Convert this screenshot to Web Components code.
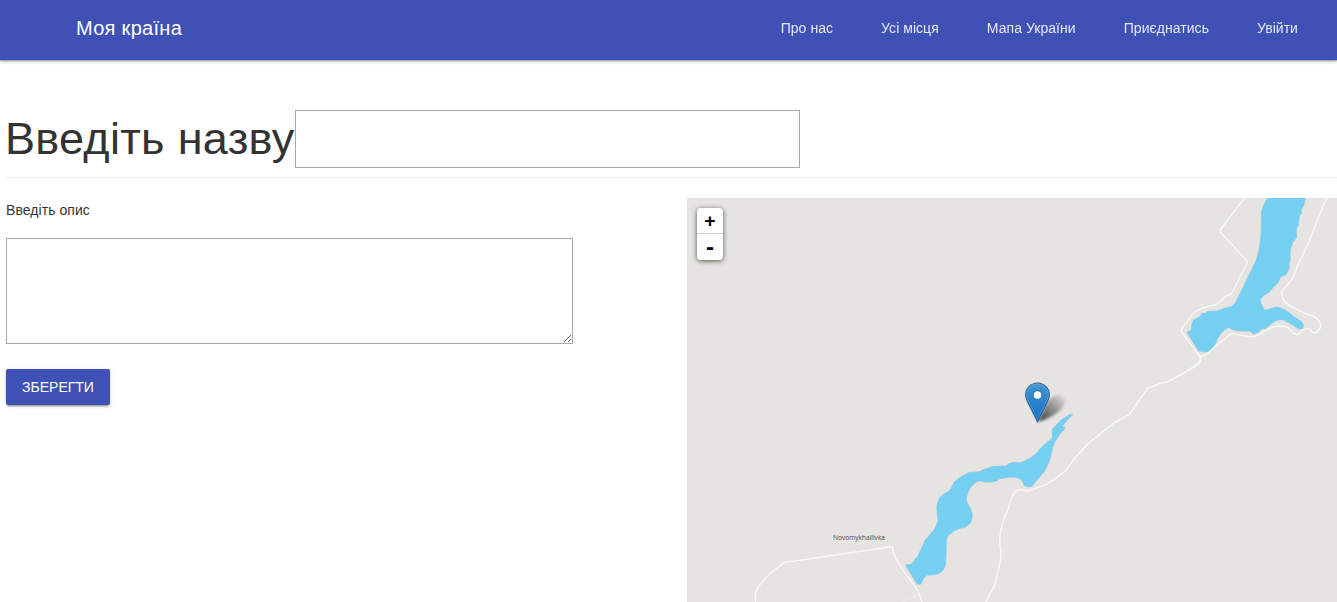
<!DOCTYPE html>
<html lang="uk">
<head>
<meta charset="utf-8">
<title>Моя країна</title>
<style>
  html, body { margin: 0; height: 100%; background: #fff; }
  body { font-family: "Liberation Sans", Arial, sans-serif; font-size: 14px; color: #333; overflow: hidden; }
</style>
</head>
<body>
<country-app></country-app>

<template id="t-app">
  <style>
    :host { display: flex; flex-direction: column; height: 100vh; overflow: hidden; }
    main { flex: 1; min-height: 0; display: flex; flex-direction: column; padding: 50px 0 0 6px; }
    .columns { flex: 1; min-height: 0; display: grid; grid-template-columns: 681px 1fr; padding-top: 20px; }
  </style>
  <site-header heading="Моя країна">
    <nav-link>Про нас</nav-link>
    <nav-link>Усі місця</nav-link>
    <nav-link>Мапа України</nav-link>
    <nav-link>Приєднатись</nav-link>
    <nav-link>Увійти</nav-link>
  </site-header>
  <main>
    <title-field>Введіть назву</title-field>
    <div class="columns">
      <place-form></place-form>
      <place-map></place-map>
    </div>
  </main>
</template>

<template id="t-header">
  <style>
    :host { display: flex; align-items: center; flex: none; height: 60px; box-sizing: border-box; padding: 0 15px 4px 76px;
      background: #3f51b5; color: #fff; position: relative;
      box-shadow: 0 2px 2px 0 rgba(0,0,0,.14), 0 1px 1px 0 rgba(0,0,0,.2), 0 1px 5px 0 rgba(0,0,0,.12); }
    .title { font-size: 20px; letter-spacing: .3px; line-height: 24px; flex: 1; }
    nav { display: flex; }
  </style>
  <span class="title"></span>
  <nav><slot></slot></nav>
</template>

<template id="t-link">
  <style>
    :host { display: block; padding: 0 24px; line-height: 24px; font-size: 14px; letter-spacing: .05px; opacity: .87; white-space: nowrap; }
  </style>
  <slot></slot>
</template>

<template id="t-title">
  <style>
    :host { display: flex; flex: none; height: 67px; border-bottom: 1px solid #eee; align-items: flex-start; }
    label { font-size: 45px; line-height: 58px; white-space: nowrap; width: 290px; margin-left: -1px; letter-spacing: .3px; }
    input { box-sizing: border-box; width: 505px; height: 58px; border: 1px solid #a9a9a9; padding: 2px; margin: 0; background: #fff; font: inherit; font-size: 45px; }
  </style>
  <label for="name"><slot></slot></label><input id="name" type="text">
</template>

<template id="t-form">
  <style>
    :host { display: flex; flex-direction: column; align-items: flex-start; }
    label { line-height: 24px; margin-bottom: 16px; letter-spacing: .06px; }
    textarea { box-sizing: border-box; width: 567px; height: 106px; border: 1px solid #a9a9a9; border-radius: 0; margin: 0 0 25px; padding: 2px; background: #fff; font: inherit; resize: both; }
  </style>
  <label for="about">Введіть опис</label>
  <textarea id="about"></textarea>
  <raised-button>Зберегти</raised-button>
</template>

<template id="t-button">
  <style>
    :host { display: block; }
    button { display: block; height: 36px; width: 104px; padding: 0; border: 0; border-radius: 2px; background: #3f51b5; color: #fff;
      font: 14px/36px "Liberation Sans", Arial, sans-serif; text-transform: uppercase; text-align: center;
      box-shadow: 0 2px 2px 0 rgba(0,0,0,.14), 0 3px 1px -2px rgba(0,0,0,.2), 0 1px 5px 0 rgba(0,0,0,.12); }
  </style>
  <button type="button"><slot></slot></button>
</template>

<template id="t-zoom">
  <style>
    :host { display: block; width: 26px; border-radius: 4px; background: #fff; box-shadow: 0 1px 5px rgba(0,0,0,.65);
      color: #000; text-align: center; font: bold 18px/26px "DejaVu Sans Mono", monospace; }
    span { display: block; height: 26px; }
    .in { border-bottom: 1px solid #ccc; height: 25px; }
    .out { font-size: 20px; }
  </style>
  <span class="in">+</span><span class="out">-</span>
</template>

<template id="t-map">
  <style>
    :host { display: block; position: relative; overflow: hidden; background: #e5e4e0; }
    svg { display: block; }
    .place { font: 7px "Open Sans", "Noto Sans", sans-serif; fill: #4b4b4b; }
    zoom-control { position: absolute; left: 10px; top: 10px; }
  </style>
  <svg width="650" height="404" viewBox="687 198 650 404">
    <defs>
      <linearGradient id="pin" x1="0" y1="0" x2="0" y2="1">
        <stop offset="0" stop-color="#4296d2"/><stop offset="1" stop-color="#126fc6"/>
      </linearGradient>
      <linearGradient id="rim" x1="0" y1="0" x2="0" y2="1">
        <stop offset="0" stop-color="#2e6c97"/><stop offset="1" stop-color="#245b9e"/>
      </linearGradient>
      <linearGradient id="shade" gradientUnits="userSpaceOnUse" x1="1038" y1="421" x2="1062" y2="397">
        <stop offset="0" stop-color="#000" stop-opacity=".75"/><stop offset=".5" stop-color="#000" stop-opacity=".4"/><stop offset="1" stop-color="#000" stop-opacity=".08"/>
      </linearGradient>
      <filter id="soft" x="-50%" y="-50%" width="200%" height="200%"><feGaussianBlur stdDeviation="1.8"/></filter>
    </defs>

    <!-- lakes -->
    <g fill="#75cff0" stroke="#9fc4e6" stroke-width="1.5">
      <path transform="translate(1170 190) scale(.33333)" d="M296 20Q278 42 274 67L273 130Q270 180 256 216L233 262L209 312Q194 345 183 350Q160 353 140 363L113 364L107 369L95 370L90 379L70 391L65 403L64 420L50 427L86 484Q103 488 118 485Q140 460 144 443Q165 412 177 413Q188 422 205 423L240 424L252 433L266 427L276 416L285 417L309 398Q323 387 340 390L368 405L387 418L399 416L401 403L394 394Q370 381 355 366Q333 350 317 351Q302 355 288 360Q281 361 278 349Q270 337 272 327L282 316L298 307L306 296L324 279L332 262L348 254Q356 244 358 233L358 217L361 210L361 181L369 157L381 142L379 119L386 104L388 80L395 69L394 59L402 46L408 20Z"/>
      <path transform="translate(890 440) scale(.33333)" d="M549 -77L541 -77Q515 -65 500 -47Q494 -39 487 -34L486 -4Q460 12 437 42Q420 56 396 67L368 67Q358 69 347 78L310 79Q285 86 267 95L236 97Q212 109 193 125Q182 149 174 155Q156 163 150 172Q139 187 140 208L144 243Q138 258 132 269Q114 291 105 301Q92 329 84 347Q72 363 63 373L47 374L50 382L80 431Q87 435 94 432L100 417L111 406L133 405Q160 400 167 374L170 299Q170 289 182 281Q197 267 225 262Q249 250 247 222Q244 204 232 189Q228 178 231 169L239 146Q257 124 269 123Q289 128 307 126Q321 124 331 116Q354 111 377 113Q390 114 397 123Q400 136 406 139Q418 144 427 139L434 128Q449 113 464 93Q480 64 483 48Q488 15 498 1L512 -22L523 -30L525 -38L518 -42Q530 -58 549 -77Z"/>
    </g>

    <!-- roads -->
    <g fill="none" stroke="#fafafd" stroke-width="3.8" stroke-linecap="round" stroke-linejoin="round">
      <g transform="translate(1170 190) scale(.33333)">
        <path d="M226 20L155 114Q147 124 155 131L225 206Q236 217 228 226L185 310Q181 315 172 317Q164 320 154 332Q137 346 126 347L97 354Q80 360 68 373L38 412Q31 421 36 427L81 488L90 499L92 507Q91 515 83 522L56 539"/>
        <path d="M90 499Q102 500 114 488L182 432Q188 430 196 433L236 439Q255 441 266 435L298 416Q309 409 330 408Q347 408 355 414L369 428Q377 438 385 432L397 421Q408 413 418 417L425 425Q434 431 441 426L451 414Q454 397 440 385Q428 375 409 372L371 353Q353 347 342 332Q331 315 338 301L363 272Q373 258 382 228L418 154L440 96L470 20"/>
      </g>
      <path transform="translate(980 340) scale(.33333)" d="M661 50L660 63Q657 72 639 83L606 102L571 122Q560 127 541 130L503 145L447 224L402 249L354 287Q324 310 318 318L280 360L258 391Q229 415 200 433L144 453L118 449Q105 452 96 469L84 508Q68 544 64 565Q57 591 60 612L63 640Q61 670 54 695L43 738L18 785"/>
      <path transform="translate(740 500) scale(.33333)" d="M46 306L47 290Q45 273 59 255Q90 216 135 187L457 140L460 158Q467 177 476 192L514 244Q540 277 548 314"/>
    </g>
    <path d="M903 602L918 594" stroke="#ebebef" stroke-width="1"/>

    <text class="place" x="833" y="540" textLength="52" lengthAdjust="spacingAndGlyphs">Novomykhailivka</text>

    <!-- marker -->
    <path d="M1038 422L1046 404Q1052 394 1060 395Q1068 398 1063 407Q1057 416 1038 422Z" fill="url(#shade)" filter="url(#soft)"/>
    <g transform="translate(1025 382)">
      <path d="M12.5 1C6 1 .6 6.2 .6 12.8C.6 15.4 1.8 18.3 2.8 20.3L12.5 39.8L22.2 20.3C23.2 18.3 24.4 15.4 24.4 12.8C24.4 6.2 19 1 12.5 1Z" fill="url(#pin)" stroke="url(#rim)" stroke-width="1.1"/>
      <path d="M12.5 2.2C6.7 2.2 1.8 6.9 1.8 12.8C1.8 15.2 2.9 17.8 3.9 19.8L12.5 37.2L21.1 19.8C22.1 17.8 23.2 15.2 23.2 12.8C23.2 6.9 18.3 2.2 12.5 2.2Z" fill="none" stroke="#fff" stroke-opacity=".14" stroke-width="1.1"/>
      <circle cx="12.5" cy="13" r="4.4" fill="#fff" stroke="#2e76ad" stroke-width="1.1"/>
    </g>
  </svg>
  <zoom-control></zoom-control>
</template>

<script>
  class TemplateElement extends HTMLElement {
    constructor() {
      super();
      const tpl = document.getElementById(this.constructor.template);
      this.attachShadow({ mode: "open" }).append(tpl.content.cloneNode(true));
    }
  }
  class NavLink extends TemplateElement { static template = "t-link"; }
  class SiteHeader extends TemplateElement {
    static template = "t-header";
    connectedCallback() {
      this.shadowRoot.querySelector(".title").textContent = this.getAttribute("heading");
    }
  }
  class TitleField extends TemplateElement { static template = "t-title"; }
  class RaisedButton extends TemplateElement { static template = "t-button"; }
  class PlaceForm extends TemplateElement { static template = "t-form"; }
  class ZoomControl extends TemplateElement { static template = "t-zoom"; }
  class PlaceMap extends TemplateElement { static template = "t-map"; }
  class CountryApp extends TemplateElement { static template = "t-app"; }

  customElements.define("nav-link", NavLink);
  customElements.define("site-header", SiteHeader);
  customElements.define("title-field", TitleField);
  customElements.define("raised-button", RaisedButton);
  customElements.define("place-form", PlaceForm);
  customElements.define("zoom-control", ZoomControl);
  customElements.define("place-map", PlaceMap);
  customElements.define("country-app", CountryApp);
</script>
</body>
</html>
